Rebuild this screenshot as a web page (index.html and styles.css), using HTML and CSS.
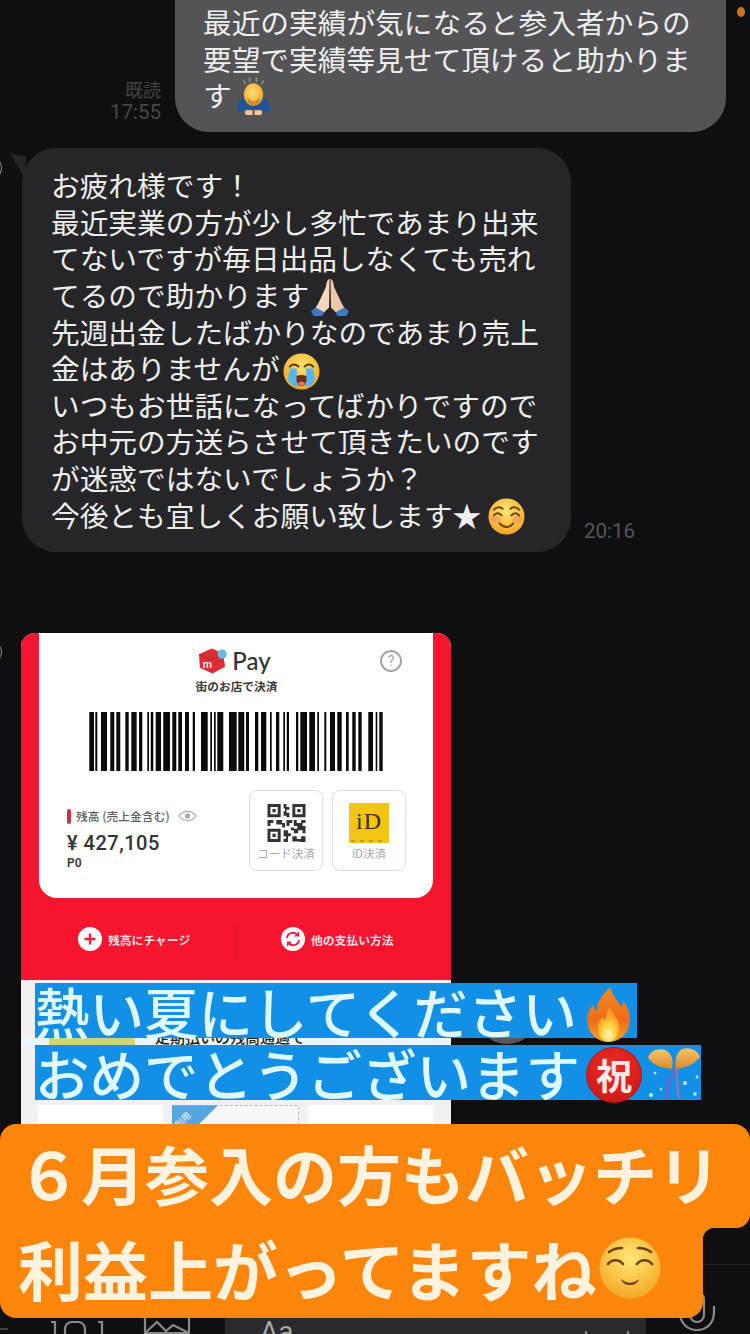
FILE: index.html
```html
<!DOCTYPE html>
<html lang="ja">
<head>
<meta charset="utf-8">
<title>LINE</title>
<link rel="stylesheet" href="styles.css">
</head>
<body>
<div class="page">
  <span class="status-dot"></span>
  <main class="chat">
    <div class="row row-out">
      <div class="meta"><span>既読</span><span class="meta-time">17:55</span></div>
      <div class="bubble bubble-out">最近の実績が気になると参入者からの<br>要望で実績等見せて頂けると助かりま<br>す<svg class="emoji emoji-bow" viewBox="0 0 40 42"><defs><radialGradient id="hair" cx=".45" cy=".4" r=".6"><stop offset="0" stop-color="#ffe27a"/><stop offset="1" stop-color="#e9a323"/></radialGradient></defs><g stroke="#8d8d8d" stroke-width="1.6" stroke-linecap="round"><path d="M10 5l1.500 3M16 2v3.500M23 2v3.500M30 5l-1.500 3"/></g><path d="M3 35c0-11 6-15 17-15s17 4 17 15c0 2-3 3-6 2l-3-3H12l-3 3c-3 1-6 0-6-2z" fill="#22549c"/><ellipse cx="20" cy="19" rx="10" ry="11.500" fill="url(#hair)"/><path d="M14 22c2 5 10 5 12 0v5c-3 4-9 4-12 0z" fill="#c98a2b"/><path d="M12 35h7v5h-6c-2 0-2-4-1-5zM21 35h7c1 1 1 5-1 5h-6z" fill="#f1c79b"/></svg></div>
    </div>
    <div class="row row-in">
      <span class="avatar"></span>
      <div class="bubble bubble-in">
        <svg class="tail" viewBox="0 0 16 26"><path d="M0 0c5 2 10 3 16 3v23C10 18 5 9 0 0z"/></svg>
        お疲れ様です！<br>最近実業の方が少し多忙であまり出来<br>てないですが毎日出品しなくても売れ<br>てるので助かります<svg class="emoji emoji-pray" viewBox="0 0 40 40"><path d="M19.500 1c-2 0-3 3-4 9L8 26l-4 7 8 5 7-7z" fill="#f4d6bd"/><path d="M20.500 1c2 0 3 3 4 9L32 26l4 7-8 5-7-7z" fill="#eec6a8"/><path d="M0 35l5-4 9 5-2 4H3zM40 35l-5-4-9 5 2 4h9z" fill="#3f78c2"/></svg><br>先週出金したばかりなのであまり売上<br>金はありませんが<svg class="emoji emoji-cry" viewBox="0 0 38 38"><defs><radialGradient id="f1" cx=".5" cy=".35" r=".7"><stop offset="0" stop-color="#ffe56e"/><stop offset="1" stop-color="#f2a21f"/></radialGradient></defs><circle cx="19" cy="19" r="18.500" fill="url(#f1)"/><path d="M7 14c2-3 6-3 9 0M22 14c3-3 7-3 9 0" fill="none" stroke="#5b3a10" stroke-width="2" stroke-linecap="round"/><path d="M7 16h7l2 19c-5-1-9-3-11-7zM24 16h7l2 12c-2 4-6 6-10 7z" fill="#5ab4ee"/><path d="M14 24c3-2 7-2 10 0 1 5-1 10-5 10s-6-5-5-10z" fill="#6b3312"/><path d="M15.500 31c2-2 5-2 7 0-1 3-6 3-7 0z" fill="#e9766a"/></svg><br>いつもお世話になってばかりですので<br>お中元の方送らさせて頂きたいのです<br>が迷惑ではないでしょうか？<br>今後とも宜しくお願い致します★<svg class="emoji emoji-relax" viewBox="0 0 38 38"><defs><radialGradient id="f2" cx=".5" cy=".35" r=".7"><stop offset="0" stop-color="#ffe774"/><stop offset="1" stop-color="#f2a01e"/></radialGradient></defs><circle cx="19" cy="19" r="18.500" fill="url(#f2)"/><ellipse cx="8" cy="22" rx="5" ry="3.500" fill="#f58f5f" opacity=".6"/><ellipse cx="30" cy="22" rx="5" ry="3.500" fill="#f58f5f" opacity=".6"/><path d="M6 12c2-3 7-3 9-1M23 11c2-2 7-2 9 1M6 18c2-3 6-3 8 0M24 18c2-3 6-3 8 0M12 26c4 5 10 5 14 0" fill="none" stroke="#6a4214" stroke-width="2" stroke-linecap="round"/></svg>
      </div>
      <time class="time-in">20:16</time>
    </div>
    <div class="row row-image">
      <span class="avatar avatar-image"></span>
      <article class="pay">
        <div class="pay-top">
          <section class="pay-card">
            <header class="pay-head">
              <span></span>
              <div class="brand">
                <svg class="brand-logo" viewBox="0 0 30 28"><path d="M14 1l12 5 2 14-13 7L2 21 1 7z" fill="#dc2d36"/><path d="M1 7l13 6 12-7" fill="none" stroke="#b81f2a" stroke-width=".8"/><circle cx="25" cy="7" r="4.800" fill="#63bde6"/><text x="5" y="21" class="brand-m">m</text></svg>
                <span class="brand-name">Pay</span>
              </div>
              <span class="help">?</span>
            </header>
            <p class="pay-sub">街のお店で決済</p>
            <svg class="barcode" viewBox="89 0 294 59"><path d="M89.300 0h4.700v59h-4.700zM95.300 0h2v59h-2zM101 0h6v59h-6zM110.300 0h4v59h-4zM116.300 0h4v59h-4zM125.300 0h3.400v59h-3.400zM131.300 0h5.400v59h-5.400zM139 0h3.300v59h-3.300zM147.300 0h1.700v59h-1.700zM150.700 0h2.600v59h-2.600zM155.700 0h5.300v59h-5.300zM163.300 0h6.700v59h-6.700zM172.300 0h4v59h-4zM178.300 0h3.700v59h-3.700zM185 0h4v59h-4zM192.700 0h2.300v59h-2.300zM201 0h6.700v59h-6.700zM210.300 0h1.700v59h-1.700zM214 0h1.700v59h-1.700zM217.300 0h6v59h-6zM229 0h7.700v59h-7.700zM238.300 0h6v59h-6zM246 0h3v59h-3zM255 0h3.300v59h-3.300zM261 0h5.300v59h-5.300zM270 0h1.700v59h-1.700zM276 0h3.300v59h-3.300zM283.300 0h1.700v59h-1.700zM286.700 0h2.300v59h-2.300zM296 0h2.300v59h-2.300zM300.300 0h6.700v59h-6.700zM309.300 0h5.700v59h-5.700zM317.300 0h1.700v59h-1.700zM324.300 0h2v59h-2zM330 0h5v59h-5zM337.300 0h4.400v59h-4.400zM346 0h2.700v59h-2.700zM352.300 0h3.400v59h-3.400zM358.300 0h3.400v59h-3.400zM368.300 0h4.700v59h-4.700zM375.700 0h1.600v59h-1.600zM379.300 0h3.400v59h-3.400z" fill="#0b0b0b"/></svg>
            <div class="pay-bottom">
              <div class="balance">
                <div class="balance-label"><i class="balance-mark"></i><span>残高 (売上金含む)</span><svg class="eye" viewBox="0 0 20 12"><path d="M1 6c4-6.500 14-6.500 18 0-4 6.500-14 6.500-18 0z" fill="none" stroke="#aaa" stroke-width="1.200"/><circle cx="10" cy="6" r="2.800" fill="#aaa"/></svg></div>
                <div class="balance-value">¥ 427,105</div>
                <div class="balance-points">P0</div>
              </div>
              <div class="tiles">
                <div class="tile">
                  <svg class="qr" viewBox="0 0 13 13"><path fill="#333" fill-rule="evenodd" d="M0 0h4.500v4.500H0zM1 1v2.500h2.500V1zM1.700 1.700h1.100v1.100H1.700zM8.500 0H13v4.500H8.500zM9.500 1v2.500H12V1zM10.200 1.700h1.100v1.100h-1.100zM0 8.500h4.500V13H0zM1 9.500V12h2.500V9.500zM1.700 10.200h1.100v1.100H1.700zM5.500 0h1v1h1v1h-1v1h1v1.500h-1V4h-1V2.500h.5V1.500h-.5zM0 5.500h2v1H1v1H0zM3 5.500h2v1h1v1.500H5V7H3zM6.500 5.500h2v1h-1v1h-1zM9 5.500h1v1h1.500v-1H13v1h-1v1h1V10h-1V9h-1.500v1H9V8.500h1.200v-1H9zM5.500 9H7v1h1v1H7v2H5.500v-1h.8v-1h-.8zM8.500 11H10v1h1.500v-1H13v2h-2v-.2H8.500zM8 8h1v1H8z"/></svg>
                  <span class="tile-label">コード決済</span>
                </div>
                <div class="tile">
                  <div class="id-mark"><span class="id-text">iD</span><i class="id-dots"></i></div>
                  <span class="tile-label">iD決済</span>
                </div>
              </div>
            </div>
          </section>
          <section class="pay-actions">
            <div class="action action-charge">
              <svg class="action-icon" viewBox="0 0 24 24"><circle cx="12" cy="12" r="12" fill="#fff"/><path d="M12 6.500v11M6.500 12h11" stroke="#e8203a" stroke-width="2.400"/></svg>
              <span>残高にチャージ</span>
            </div>
            <div class="action action-other">
              <svg class="action-icon" viewBox="0 0 24 24"><circle cx="12" cy="12" r="12" fill="#fff"/><path d="M6 11c.5-5 7-7 10.500-3M18 13c-.5 5-7 7-10.500 3" fill="none" stroke="#e8203a" stroke-width="2"/><path d="M18 4.500v5h-5zM6 19.500v-5h5z" fill="#e8203a"/></svg>
              <span>他の支払い方法</span>
            </div>
          </section>
        </div>
        <section class="pay-lower">
          <div class="notice"><span class="notice-tag"></span><span class="notice-text">定期払いの残高通過で</span></div>
          <div class="coupons">
            <div class="coupon"></div>
            <div class="coupon coupon-dashed"><span class="coupon-corner"><span class="coupon-corner-text">利用</span></span></div>
            <div class="coupon"></div>
          </div>
        </section>
      </article>
    </div>
  </main>
  <footer class="bar">
    <svg class="bar-back" viewBox="0 0 12 16"><path d="M0 8h12" stroke="#777" stroke-width="1.500"/></svg>
    <svg class="bar-camera" viewBox="0 0 56 16"><path d="M3 4h4v12M24 4c-5 0-7 4-7 8v4M30 4c5 0 7 4 7 8v4M24 4h6M50 4h4v12" fill="none" stroke="#8a8a8a" stroke-width="2.200"/></svg>
    <svg class="bar-picture" viewBox="0 0 48 16"><path d="M2 0v15h44V0M2 15l12-11 9 9 7-6 16 8" fill="none" stroke="#8a8a8a" stroke-width="2.200"/></svg>
    <div class="input">
      <span class="input-text">Aa</span>
      <svg class="input-smile" viewBox="0 0 50 18"><path d="M4 0c0 10 3 15 5 18M46 0c0 10-3 15-5 18M18 8c3 5 11 5 14 0" fill="none" stroke="#8a8a8a" stroke-width="2.200"/></svg>
    </div>
    <svg class="bar-mic" viewBox="0 0 38 46"><rect x="12" y="0" width="14" height="30" rx="7" fill="none" stroke="#8a8a8a" stroke-width="2.200"/><path d="M2 14v6c0 12 8 18 17 18s17-6 17-18v-6" fill="none" stroke="#8a8a8a" stroke-width="2.200"/></svg>
  </footer>

  <span class="scroll-button"></span>

  <div class="blue-captions">
    <div class="blue-line blue-line-one">熱い夏にしてください<svg class="cap-emoji cap-fire" viewBox="0 0 44 56"><defs><linearGradient id="fl" x1="0" y1="0" x2="0" y2="1"><stop offset="0" stop-color="#f58a1f"/><stop offset=".6" stop-color="#ef6a1a"/><stop offset="1" stop-color="#f9a52a"/></linearGradient><radialGradient id="fc" cx=".5" cy=".8" r=".6"><stop offset="0" stop-color="#fff8c4"/><stop offset=".5" stop-color="#ffd23f"/><stop offset="1" stop-color="#fa9a22"/></radialGradient></defs><path d="M24 0c2 9 7 13 11 20 1-2 2-3 2-6 5 6 7 13 7 19 0 13-10 23-22 23S0 46 0 33c0-6 3-11 6-15 1 3 2 5 4 6C10 14 17 6 24 0z" fill="url(#fl)"/><path d="M23 20c1 6 10 11 10 21 0 8-5 15-11 15s-11-6-11-14c0-6 3-9 5-12 1 2 1 3 3 4 0-5 2-10 4-14z" fill="url(#fc)"/></svg></div>
    <div class="blue-line blue-line-two">おめでとうございます<span class="iwai">祝</span><svg class="cap-emoji cap-popper" viewBox="0 0 54 52"><defs><linearGradient id="ball" x1="0" y1="0" x2="0" y2="1"><stop offset="0" stop-color="#f6c36a"/><stop offset="1" stop-color="#d98a2c"/></linearGradient></defs><path d="M1 11C3 2 17-1 23 7c3 4 3 9 2 15C16 21 7 19 1 11z" fill="url(#ball)"/><path d="M53 10C50 1 36-2 31 6c-3 5-3 10-2 16 9-1 18-4 24-12z" fill="url(#ball)"/><path d="M25 22c6 6-6 10-4 16s-5 8 0 14" fill="none" stroke="#7a62c8" stroke-width="2.500"/><path d="M29 22c2 10 1 20 3 30" fill="none" stroke="#b76aa8" stroke-width="1.800"/><g fill="#bfe8ff"><circle cx="8" cy="26" r="1.300"/><circle cx="4" cy="48" r="2"/><circle cx="38" cy="36" r="2"/><circle cx="50" cy="30" r="1.400"/><circle cx="48" cy="47" r="1.800"/><circle cx="14" cy="42" r="1.200"/></g></svg></div>
  </div>

  <div class="orange-caption">
    <div class="orange-line orange-line-one">６月参入の方もバッチリ</div>
    <div class="orange-line orange-line-two">利益上がってますね<svg class="cap-relieved" viewBox="0 0 62 62"><defs><radialGradient id="f3" cx=".5" cy=".35" r=".7"><stop offset="0" stop-color="#ffe877"/><stop offset="1" stop-color="#f3a420"/></radialGradient></defs><circle cx="31" cy="31" r="30.500" fill="url(#f3)"/><path d="M10 15c4-3 9-4 13-4M39 11c4 0 9 1 13 4M9 27c4-5 11-5 15 0M38 27c4-5 11-5 15 0" fill="none" stroke="#6a4214" stroke-width="2.600" stroke-linecap="round"/><path d="M22 42c6 5 12 5 18 0-2 8-16 8-18 0z" fill="#6a4214"/></svg></div>
  </div>
</div>
</body>
</html>
```

FILE: styles.css
```css
* { box-sizing: border-box; }

html, body {
  margin: 0;
  padding: 0;
  background: #0f0f11;
}

body {
  font-family: "Noto Sans CJK JP", "Noto Sans", sans-serif;
}

.page {
  position: relative;
  display: flex;
  flex-direction: column;
  width: 750px;
  height: 1334px;
  overflow: hidden;
  background: #0f0f11;
}

.status-dot {
  position: absolute;
  top: 7px;
  right: 5px;
  width: 8px;
  height: 10px;
  border-radius: 50%;
  background: #c9741c;
}

.chat {
  flex: 1;
  min-height: 0;
  display: flex;
  flex-direction: column;
  margin-top: -50px;
  overflow: hidden;
}

.row {
  display: flex;
  flex: none;
  align-items: flex-end;
  position: relative;
}

.row-out {
  justify-content: flex-end;
  gap: 14px;
  padding-right: 24px;
}

.row-in {
  gap: 13px;
  margin-top: 16px;
  padding-left: 22px;
}

.row-image {
  margin-top: 81px;
  padding-left: 21px;
  align-items: flex-start;
}

.meta {
  display: flex;
  flex-direction: column;
  align-items: flex-end;
  margin-bottom: 8px;
  color: #434346;
  font-size: 18px;
  line-height: 23px;
}

.meta-time {
  color: #48484b;
  font-family: Roboto, sans-serif;
  font-size: 20.500px;
}

.bubble {
  position: relative;
  width: 551px;
  font-size: 28.7px;
  line-height: 36.6px;
  white-space: nowrap;
  color: #eeeeee;
}

.bubble-out {
  padding: 54px 0 18.500px 28px;
  border-radius: 34px;
  background: #545456;
}

.bubble-in {
  width: 549px;
  padding: 19px 0 19px 29px;
  border-radius: 34px;
  background: #262628;
}

.tail {
  position: absolute;
  left: -12px;
  top: 5px;
  width: 16px;
  height: 26px;
  fill: #262628;
}

.avatar {
  position: absolute;
  left: -44px;
  top: 8px;
  width: 46px;
  height: 24px;
  border: 1px solid #8c8c8c;
  border-left: 0;
  border-radius: 0 14px 14px 0;
}

.avatar-image {
  top: 8px;
  height: 22px;
}

.time-in {
  margin-bottom: 11px;
  color: #56565a;
  font-family: Roboto, sans-serif;
  font-size: 20.500px;
  line-height: 20px;
}

.emoji {
  display: inline-block;
  vertical-align: 4px;
  margin-top: -14px;
  margin-bottom: -14px;
}

.emoji-bow {
  width: 39px;
  height: 41px;
  margin-left: 2px;
}

.emoji-pray {
  width: 38px;
  height: 40px;
  margin-left: 2px;
}

.emoji-cry {
  width: 37px;
  height: 37px;
  margin-top: -12px;
  margin-bottom: -12px;
  margin-left: 3px;
  vertical-align: 2px;
}

.emoji-relax {
  width: 37px;
  height: 37px;
  margin-top: -12px;
  margin-bottom: -12px;
  margin-left: 7px;
}

/* merpay screenshot */
.pay {
  width: 430px;
  height: 760px;
  border-radius: 14px;
  overflow: hidden;
  background: #f1f1f5;
}

.pay-top {
  background: #f5152f;
}

.pay-card {
  margin: 0 18px;
  padding: 14px 27px 27px 28px;
  border-radius: 0 0 18px 18px;
  background: #ffffff;
}

.pay-head {
  display: grid;
  grid-template-columns: 1fr auto 1fr;
  align-items: center;
  height: 28px;
  padding-right: 4px;
}

.brand {
  display: flex;
  align-items: center;
  gap: 5px;
}

.brand-logo {
  width: 29px;
  height: 28px;
}

.brand-m {
  fill: #ffffff;
  font-family: Roboto, sans-serif;
  font-size: 11px;
  font-weight: 500;
}

.brand-name {
  color: #333333;
  font-family: Lato, sans-serif;
  font-size: 24px;
  line-height: 28px;
  font-weight: 500;
}

.help {
  justify-self: end;
  width: 22px;
  height: 22px;
  border: 2px solid #a4a4a4;
  border-radius: 50%;
  color: #a4a4a4;
  font-family: Roboto, sans-serif;
  font-size: 14px;
  line-height: 18px;
  text-align: center;
}

.pay-sub {
  margin: 3px 0 0;
  color: #3a3a3a;
  font-size: 11.700px;
  line-height: 16px;
  font-weight: 700;
  text-align: center;
}

.barcode {
  display: block;
  width: 294px;
  height: 59px;
  margin: 18px 0 0 22px;
}

.pay-bottom {
  display: flex;
  justify-content: space-between;
  align-items: flex-start;
  margin-top: 19px;
}

.balance {
  padding-top: 17px;
}

.balance-label {
  display: flex;
  align-items: center;
  height: 18px;
  color: #5f5f5f;
  font-size: 11.800px;
  line-height: 18px;
  font-weight: 500;
}

.balance-mark {
  width: 4px;
  height: 15px;
  margin-right: 5px;
  border-radius: 2px;
  background: #c8324a;
}

.eye {
  width: 19px;
  height: 12px;
  margin-left: 8px;
}

.balance-value {
  margin-top: 6px;
  color: #333333;
  font-family: Roboto, sans-serif;
  font-size: 20px;
  line-height: 24px;
  font-weight: 500;
  letter-spacing: .5px;
}

.balance-points {
  color: #444444;
  font-family: Roboto, sans-serif;
  font-size: 12px;
  line-height: 14px;
  font-weight: 700;
  margin-top: 1px;
}

.tiles {
  display: flex;
  gap: 9px;
}

.tile {
  display: flex;
  flex-direction: column;
  align-items: center;
  width: 74px;
  height: 81px;
  padding-top: 13px;
  border: 1px solid #dedede;
  border-radius: 8px;
}

.qr {
  width: 39px;
  height: 38px;
}

.tile-label {
  margin-top: 3px;
  color: #a8a8a8;
  font-size: 11.500px;
  line-height: 16px;
  white-space: nowrap;
}

.id-mark {
  position: relative;
  display: flex;
  justify-content: center;
  width: 40px;
  height: 40px;
  margin-top: -1px;
  margin-bottom: -1px;
  border-radius: 1px;
  background: #f2c514;
}

.id-text {
  color: #3a2c10;
  font-family: "Liberation Serif", serif;
  font-size: 24px;
  line-height: 36px;
  letter-spacing: 1px;
}

.id-dots {
  position: absolute;
  left: 2px;
  right: 2px;
  bottom: 1px;
  height: 2px;
  background: repeating-linear-gradient(90deg, #c99a1e 0 4px, transparent 4px 9px);
}

.pay-actions {
  display: flex;
  height: 82px;
}

.action {
  display: flex;
  align-items: center;
  gap: 6px;
  width: 215px;
  color: #ffdfe2;
  font-size: 11.800px;
  font-weight: 700;
}

.action-charge {
  padding-left: 57px;
}

.action-other {
  padding-left: 45px;
  position: relative;
}

.action-other::before {
  content: "";
  position: absolute;
  left: 0;
  top: 26px;
  width: 1px;
  height: 36px;
  background: #dc1129;
}

.action-icon {
  width: 24px;
  height: 24px;
}

.pay-lower {
  background: #f1f1f5;
}

.notice {
  display: flex;
  gap: 20px;
  height: 65px;
  padding: 48px 0 0 28px;
  overflow: hidden;
  background: linear-gradient(#f1f1f5 0 58px, #e9f6fb 58px);
}

.notice-tag {
  width: 86px;
  height: 17px;
  background: #cfd66b;
}

.notice-text {
  color: #222222;
  font-size: 15px;
  line-height: 17px;
  font-weight: 500;
  white-space: nowrap;
}

.coupons {
  display: flex;
  gap: 9px;
  margin-top: 60px;
  padding: 0 18px 0 17px;
}

.coupon {
  position: relative;
  flex: 1;
  height: 80px;
  border-radius: 3px;
  background: #ffffff;
}

.coupon-dashed {
  border: 1px dashed #b8b8bc;
  background: #f7f7f9;
}

.coupon-corner {
  position: absolute;
  left: -1px;
  top: -1px;
  width: 46px;
  height: 46px;
  background: #54a5e0;
  clip-path: polygon(0 0, 100% 0, 0 100%);
}

.coupon-corner-text {
  display: block;
  width: 30px;
  margin-top: 6px;
  color: #ffffff;
  font-size: 9px;
  line-height: 10px;
  transform: rotate(-45deg);
}

/* bottom input bar */
.bar {
  flex: none;
  display: flex;
  height: 70px;
  border-top: 1px solid #222225;
  background: #0f0f11;
}

.bar-back {
  width: 8px;
  height: 16px;
  margin: 56px 40px 0 0;
}

.bar-camera {
  width: 56px;
  height: 16px;
  margin: 53px 39px 0 0;
}

.bar-picture {
  width: 48px;
  height: 16px;
  margin: 53px 34px 0 0;
}

.input {
  display: flex;
  justify-content: space-between;
  width: 421px;
  height: 90px;
  margin-top: 20px;
  padding: 33px 14px 0 35px;
  background: #2a2a2e;
}

.input-text {
  color: #a8a8a8;
  font-family: Roboto, sans-serif;
  font-size: 28px;
  line-height: 28px;
}

.input-smile {
  width: 50px;
  height: 18px;
  margin-top: 13px;
}

.bar-mic {
  width: 38px;
  height: 46px;
  margin: 27px 0 0 32px;
}

/* caption overlays */
.scroll-button {
  position: absolute;
  left: 476px;
  top: 984px;
  width: 62px;
  height: 60px;
  border-radius: 50%;
  background: #58585c;
}

.blue-captions {
  position: absolute;
  left: 35px;
  top: 983px;
  display: flex;
  flex-direction: column;
  align-items: flex-start;
  gap: 7px;
}

.blue-line {
  display: flex;
  align-items: center;
  height: 55px;
  background: #1190e6;
  color: #dff8ff;
  font-size: 54.500px;
  font-weight: 500;
  line-height: 55px;
  white-space: nowrap;
}

.blue-line-one {
  width: 602px;
}

.blue-line-two {
  width: 666px;
}

.cap-emoji {
  flex: none;
}

.cap-fire {
  width: 43px;
  height: 55px;
  margin: 4px 0 -4px 10px;
}

.iwai {
  flex: none;
  width: 56px;
  height: 56px;
  margin: 5px 0 0 6px;
  border: 1px solid #b91412;
  border-radius: 50%;
  background: radial-gradient(circle at 50% 35%, #ef2a24, #c51813);
  color: #ffe8e8;
  font-size: 36px;
  font-weight: 700;
  line-height: 52px;
  text-align: center;
}

.cap-popper {
  width: 54px;
  height: 52px;
  margin-left: 5px;
}

.orange-caption {
  position: absolute;
  left: 0;
  top: 1124px;
  display: flex;
  flex-direction: column;
  align-items: flex-start;
  color: #fff3e0;
  font-weight: 700;
  white-space: nowrap;
}

.orange-line {
  display: flex;
  align-items: center;
  background: #fc860c;
  line-height: 90px;
}

.orange-line-one {
  width: 750px;
  height: 104px;
  padding: 0 0 8px 17px;
  border-radius: 16px 16px 14px 0;
  font-size: 64px;
}

.orange-line-two {
  position: relative;
  width: 703px;
  height: 90px;
  padding: 0 0 10px 18px;
  border-radius: 0 0 16px 16px;
  font-size: 65px;
}

.orange-line-two::after {
  content: "";
  position: absolute;
  left: 100%;
  top: 0;
  width: 12px;
  height: 12px;
  background: radial-gradient(circle at 100% 100%, transparent 12px, #fc860c 12.500px);
}

.cap-relieved {
  width: 62px;
  height: 62px;
  margin-left: 2px;
}
```
